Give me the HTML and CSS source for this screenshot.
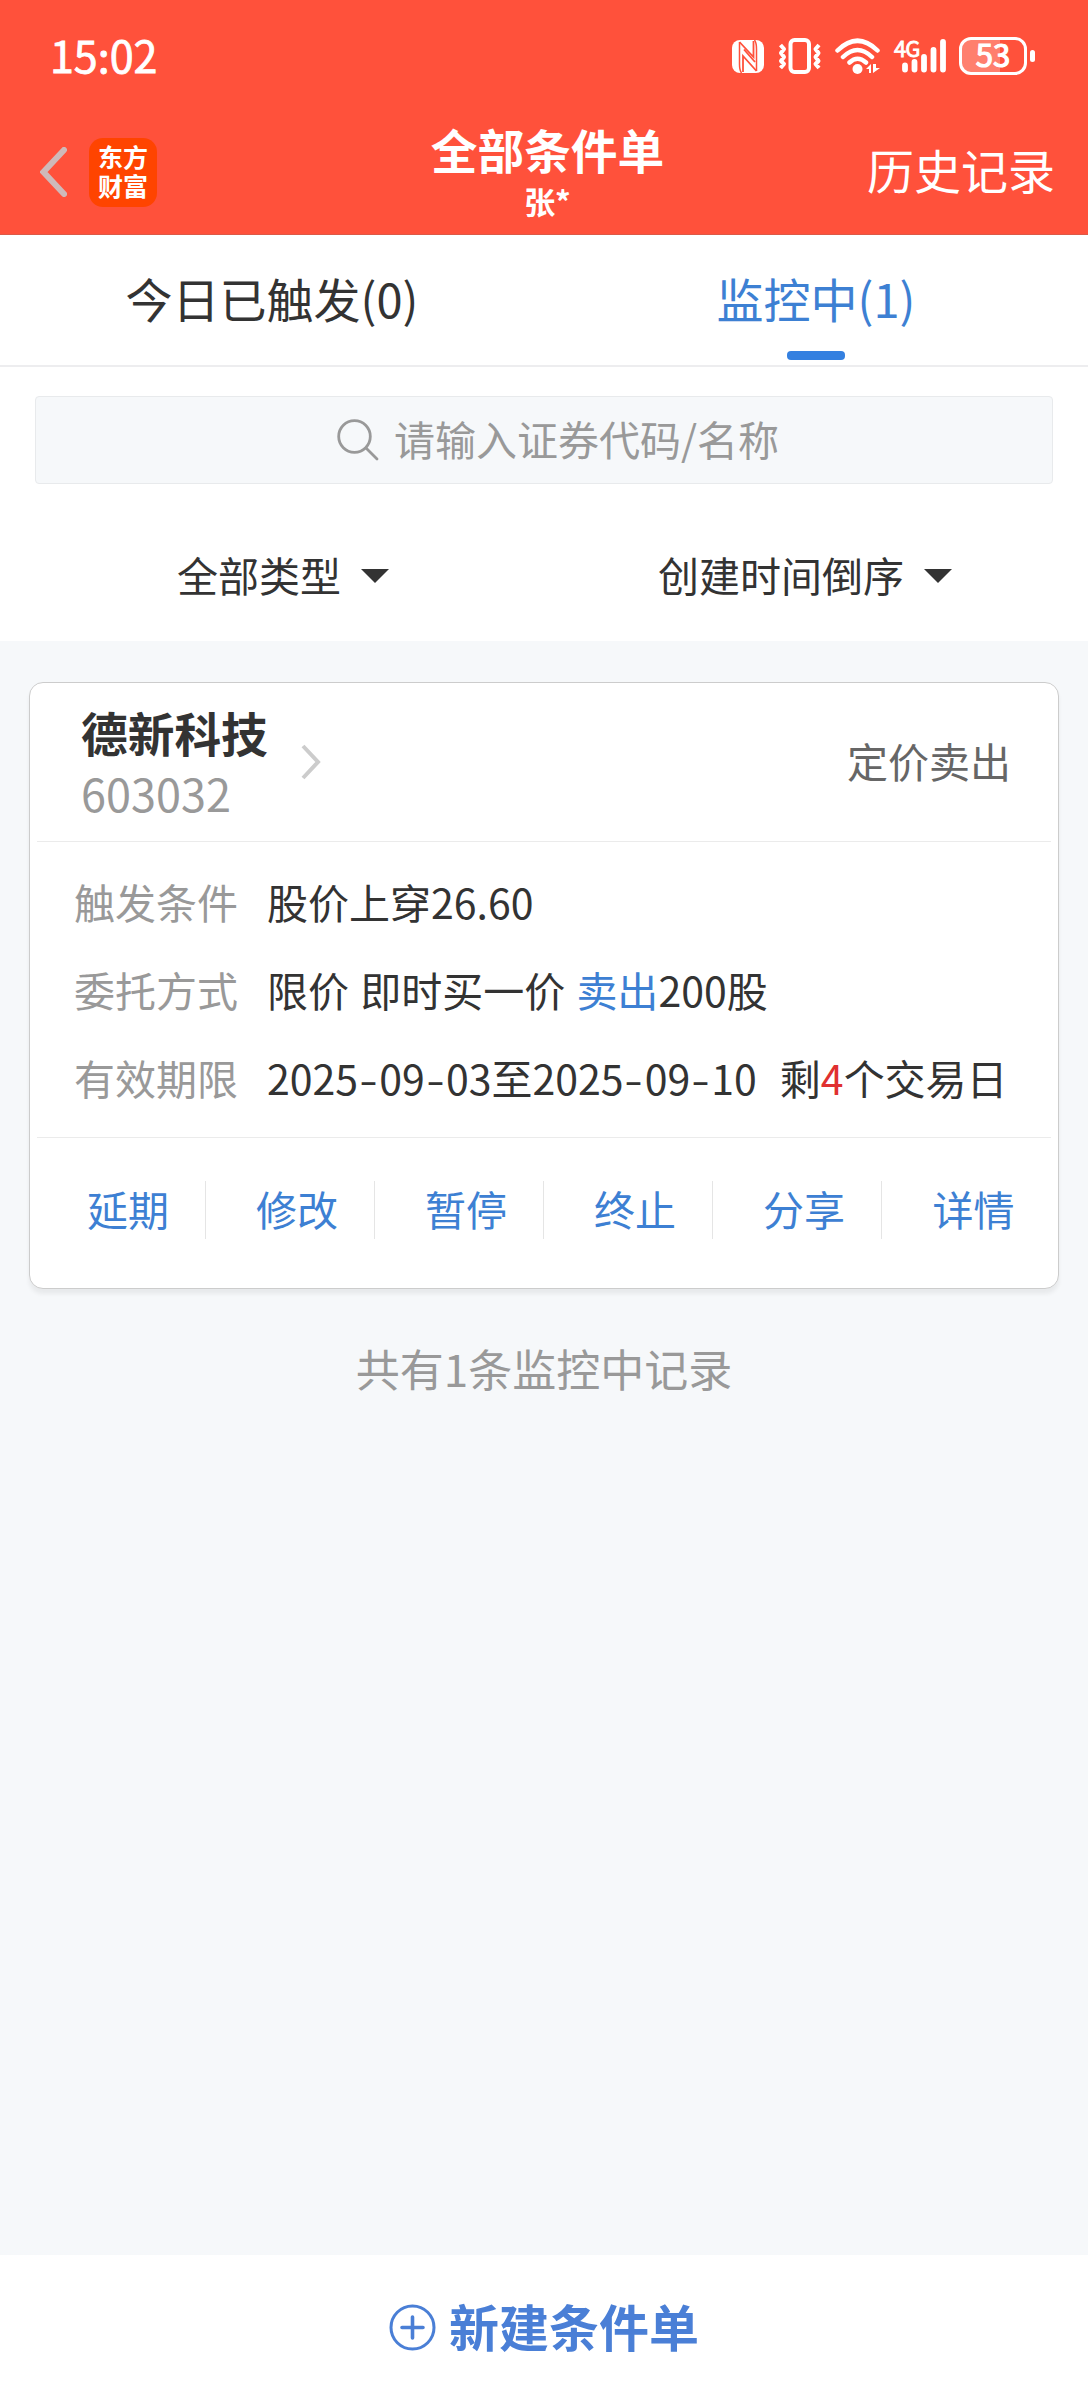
FILE: index.html
```html
<!DOCTYPE html>
<html lang="zh-CN">
<head>
<meta charset="utf-8">
<title>全部条件单</title>
<link rel="stylesheet" href="styles.css">
</head>
<body>
<div class="app">
  <header class="header">
    <div class="status">
      <span class="clock">15:02</span>
      <div class="status-icons">
        <svg class="nfc" width="32" height="33" viewBox="0 0 32 33">
          <rect width="32" height="33" rx="8" fill="#fff"/>
          <path d="M7.500 2v22c0 4 .5 7 2 9M24.500 31V9c0-4-.5-7-2-9" fill="none" stroke="#ff513b" stroke-width="1.500"/>
          <path d="M7.500 2L21.500 17V1M24.500 31L11 16V32M12 9.500L23 22" fill="none" stroke="#ff513b" stroke-width="1.800"/>
        </svg>
        <svg class="vibrate" width="44" height="36" viewBox="0 0 44 36" fill="none" stroke="#fff">
          <rect x="12.500" y="2" width="18.500" height="32" rx="4" stroke-width="4"/>
          <path d="M2.500 7l3.500 4-3 4 3 4-3 4 3 3-3.500 4M41 7l-3.500 4 3 4-3 4 3 4-3 3 3.500 4" stroke-width="4" stroke-linejoin="round"/>
        </svg>
        <svg class="wifi" width="46" height="36" viewBox="0 0 46 36">
          <path d="M2.500 12.500Q22.500-7 42.500 12.500M8 19Q22.500 5 37 19M14.500 24.500Q22.500 17 31 24.500" fill="none" stroke="#fff" stroke-width="4.500" stroke-linecap="round"/>
          <circle cx="22.500" cy="31" r="5" fill="#fff"/>
          <path d="M31 31l5-5v9h-2v-4zM38 26v9l7-5h-4v-4z" fill="#fff"/>
        </svg>
        <div class="signal">
          <span class="net">4G</span>
          <svg width="44" height="36" viewBox="0 0 44 36" stroke="#fff" stroke-width="5.800" stroke-linecap="round">
            <path d="M3 27.500v4M12.500 24v7.500M22 19v12.500M31.500 12v19.500M41 4v27.500"/>
          </svg>
        </div>
        <div class="battery"><span class="cell">53</span><i class="nub"></i></div>
      </div>
    </div>
    <nav class="navbar">
      <div class="nav-left">
        <svg width="27" height="50" viewBox="0 0 27 50"><path d="M24 3L3.500 25 24 47" fill="none" stroke="#cfb9b9" stroke-width="6" stroke-linecap="round"/></svg>
        <div class="logo"><span>东方</span><span>财富</span></div>
      </div>
      <div class="titles"><h1>全部条件单</h1><p>张*</p></div>
      <a class="history">历史记录</a>
    </nav>
  </header>

  <div class="tabs">
    <div class="tab">今日已触发(0)</div>
    <div class="tab active">监控中(1)</div>
  </div>

  <section class="filters">
    <div class="search">
      <svg width="42" height="42" viewBox="0 0 42 42" fill="none" stroke="#999" stroke-width="2.800" stroke-linecap="round"><circle cx="17.500" cy="17.500" r="15.800"/><path d="M29 29l11 11"/></svg>
      <span>请输入证券代码/名称</span>
    </div>
    <div class="selects">
      <div class="select type"><span>全部类型</span><i class="caret"></i></div>
      <div class="select order"><span>创建时间倒序</span><i class="caret"></i></div>
    </div>
  </section>

  <main class="content">
    <article class="card">
      <div class="card-head">
        <div class="stock"><h2>德新科技</h2><p>603032</p></div>
        <svg class="chevron" width="20" height="36" viewBox="0 0 20 36"><path d="M2 2l15 16L2 34" fill="none" stroke="#ccc" stroke-width="4"/></svg>
        <span class="kind">定价卖出</span>
      </div>
      <dl class="details">
        <div class="row"><dt>触发条件</dt><dd>股价上穿26.60</dd></div>
        <div class="row"><dt>委托方式</dt><dd>限价 即时买一价 <span class="blue">卖出</span>200股</dd></div>
        <div class="row"><dt>有效期限</dt><dd>2025<i class="dash">-</i>09<i class="dash">-</i>03至2025<i class="dash">-</i>09<i class="dash">-</i>10<span class="left">剩<span class="red">4</span>个交易日</span></dd></div>
      </dl>
      <div class="actions">
        <a>延期</a><a>修改</a><a>暂停</a><a>终止</a><a>分享</a><a>详情</a>
      </div>
    </article>
    <p class="summary">共有1条监控中记录</p>
  </main>

  <footer class="create">
    <svg width="47" height="47" viewBox="0 0 47 47" fill="none" stroke="#4a7fd6" stroke-width="3"><circle cx="23.500" cy="23.500" r="21.500"/><path d="M23.500 13v21M13 23.500h21" stroke-width="3.600" stroke-linecap="round"/></svg>
    <span>新建条件单</span>
  </footer>
</div>
</body>
</html>
```

FILE: styles.css
```css
* { box-sizing: border-box; margin: 0; padding: 0; }
body { font-family: "Noto Sans CJK SC", "Noto Sans", sans-serif; color: #333; background: #f6f8fa; }
i { font-style: normal; }
.app { width: 1088px; height: 2400px; display: flex; flex-direction: column; font-size: 41px; line-height: 60px; white-space: nowrap; }

.header { height: 235px; background: #ff513b; color: #fff; border-bottom: 1px solid #dc5a48; }
.status { height: 112px; padding: 0 53px 0 50px; display: flex; justify-content: space-between; align-items: center; }
.clock { font-size: 43px; -webkit-text-stroke: 0.8px #fff; margin-top: -4px; }
.status-icons { display: flex; align-items: center; }
.vibrate { margin-left: 14px; }
.wifi { margin-left: 13px; }
.signal { width: 52px; height: 36px; margin-left: 13px; position: relative; display: flex; justify-content: flex-end; }
.net { position: absolute; left: 0; top: -3px; font-size: 22px; line-height: 24px; letter-spacing: -1px; -webkit-text-stroke: 0.8px #fff; }
.battery { display: flex; align-items: center; margin-left: 13px; gap: 3px; }
.cell { width: 68px; height: 38px; border: 3px solid #fff; border-radius: 12px; background: linear-gradient(90deg, #ff7f6e 38px, transparent 38px); font-size: 31px; line-height: 28px; text-align: center; -webkit-text-stroke: 1.2px #fff; }
.nub { width: 5px; height: 12px; border-radius: 3px; background: #fff; }

.navbar { height: 122px; padding: 0 33px 0 40px; display: grid; grid-template-columns: 1fr auto 1fr; align-items: center; }
.nav-left { display: flex; align-items: center; gap: 22px; margin-top: -2px; }
.logo { width: 68px; height: 69px; border-radius: 14px; background: #ff4400; display: flex; flex-direction: column; align-items: center; justify-content: center; font-size: 25px; line-height: 29px; font-weight: 700; padding-bottom: 3px; }
.titles { text-align: center; padding-right: 7px; margin-right: -7px; }
h1 { font-size: 46.700px; line-height: 54px; font-weight: 700; }
.titles p { font-size: 31px; line-height: 44px; font-weight: 700; margin: 3px 0 1px; }
.history { justify-self: end; font-size: 47px; margin-top: -8px; }

.tabs { height: 132px; display: flex; background: #fff; border-bottom: 2px solid #ededef; }
.tab { flex: 1; height: 131px; display: flex; flex-direction: column; align-items: center; font-size: 47px; line-height: 126px; }
.active { color: #3d80d3; }
.active::after { content: ""; width: 58px; height: 9px; margin-top: -10px; border-radius: 4px; background: #3480e0; flex: none; }

.filters { height: 274px; padding: 29px 35px 0; background: #fff; }
.search { height: 88px; border: 1px solid #e8eaec; border-radius: 4px; background: #f6f8fa; color: #999; display: flex; justify-content: center; align-items: center; gap: 15px; padding-left: 28px; }
.search span { margin-top: -4px; }
.selects { height: 156px; padding: 27px 0 0; display: flex; }
.select { display: flex; align-items: center; gap: 20px; }
.select span { margin-top: -4px; }
.type { padding-left: 142px; width: 623px; }
.caret { border: 14px solid transparent; border-top-color: #333; border-bottom: 0; }

.content { flex: 1; padding: 41px 29px 0; }
.card { height: 607px; background: #fff; border: 1px solid #ccc; border-radius: 14px; box-shadow: 0 5px 4px rgba(0, 0, 0, .06); padding: 0 7px; }
.card-head { height: 159px; border-bottom: 1px solid #ebebeb; display: flex; align-items: center; padding: 0 40px 0 44px; }
h2 { font-size: 46.700px; line-height: 62px; font-weight: 700; margin-top: -1px; }
.stock p { font-size: 45px; line-height: 60px; color: #999; }
.chevron { margin-left: 33px; }
.kind { margin-left: auto; color: #666; margin-top: -4px; }
.details { height: 296px; padding-top: 15px; border-bottom: 1px solid #ebebeb; }
.row { display: flex; padding-left: 37px; height: 88px; line-height: 88px; }
dt { width: 193px; color: #999; }
dd { word-spacing: 2px; }
.blue { color: #3d80d3; }
.red { color: #e03030; }
.dash { display: inline-block; width: 21.200px; text-align: center; transform: scaleX(1.300); }
.left { margin-left: 23px; }
.actions { display: grid; grid-template-columns: repeat(6, 169px); padding-top: 43px; }
.actions a { height: 58px; line-height: 54px; padding-left: 14px; text-align: center; color: #3d80d3; border-right: 1px solid #e5e5e5; }
.actions a:last-child { border-right: 0; }
.summary { margin-top: 49px; font-size: 44px; text-align: center; color: #999; }

.create { height: 145px; background: #fff; color: #4a7fd6; display: flex; align-items: center; justify-content: center; gap: 13px; font-size: 50px; font-weight: 700; }
.create span { margin-top: -6px; }
```
